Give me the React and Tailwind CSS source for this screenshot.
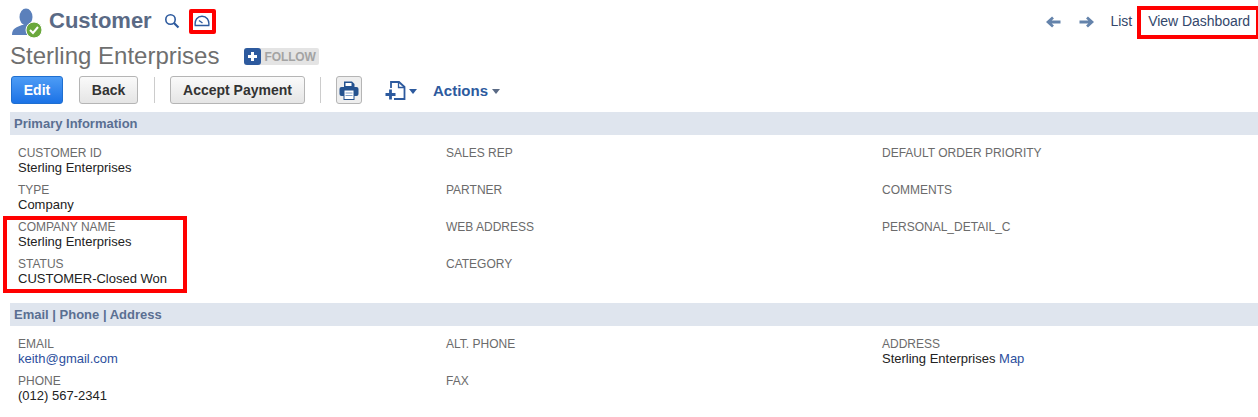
const SectionBar = ({ title }) => (
  <div className="ml-[10px] h-[23px] bg-[#dfe5ee] pl-[4px] text-[13px] leading-[23px] font-bold text-[#5a6f92]">{title}</div>
);

const Field = ({ label, children }) => (
  <div className="h-[37px]">
    <div className="text-[12px] leading-[15px] text-[#6b6b6b]">{label}</div>
    <div className="-mt-[1px] text-[13px] leading-[15px] text-[#222]">{children}</div>
  </div>
);

const Col = ({ w, children }) => <div style={{ width: w }}>{children}</div>;

const UserIcon = () => (
  <svg width="32" height="32" viewBox="0 0 32 32" className="shrink-0">
    <ellipse cx="15" cy="11" rx="6.5" ry="8.5" fill="#5b80bb" />
    <path d="M1 29 C1 22 6 21 11 19 L19 19 C23 21 27 22 27 29 Z" fill="#5b80bb" />
    <circle cx="23" cy="24" r="8" fill="#6aa83c" stroke="#fff" strokeWidth="1" />
    <path d="M19 24 l3 3 l5 -6" fill="none" stroke="#fff" strokeWidth="2" />
  </svg>
);

const Caret = ({ c }) => (
  <svg width="8" height="5" viewBox="0 0 8 5"><path d="M0 0 H8 L4 5 Z" fill={c} /></svg>
);

const Btn = ({ children, w }) => (
  <button className="h-[28px] rounded-[3px] border border-[#b5b5b5] bg-gradient-to-b from-[#fafafa] to-[#e5e5e5] text-[14px] font-bold text-[#333]" style={{ width: w }}>
    {children}
  </button>
);

const Sep = () => <div className="h-[26px] w-px bg-[#ccc]" />;

export default function App() {
  return (
    <div className="relative h-[417px] w-[1258px] overflow-hidden bg-white font-['Liberation_Sans',Arial,sans-serif]">
      {/* title row */}
      <div className="flex h-[42px] items-center pl-[11px]">
        <div className="mt-[1px]"><UserIcon /></div>
        <span className="ml-[6px] text-[22px] leading-none font-bold text-[#5a6a85]">Customer</span>
        <svg width="16" height="16" viewBox="0 0 16 16" className="ml-[12px]">
          <circle cx="6.5" cy="6.5" r="4.7" fill="none" stroke="#2d5a9e" strokeWidth="1.6" />
          <path d="M10 10 L14.5 14.5" stroke="#2d5a9e" strokeWidth="2.2" />
        </svg>
        <svg width="16" height="12" viewBox="0 0 16 12" className="ml-[14px]">
          <path d="M1.2 10.5 C0.5 5 3.5 1.2 8 1.2 C12.5 1.2 15.5 5 14.8 10.5 Z" fill="none" stroke="#2d5a9e" strokeWidth="1.4" />
          <path d="M5 5.5 L8.5 8" stroke="#2d5a9e" strokeWidth="1.4" />
        </svg>
        <div className="mt-[1px] ml-auto flex items-center pr-[8px]">
          <svg width="15" height="12" viewBox="0 0 15 12">
            <path d="M14.5 6 H3 M7 1.5 L2 6 L7 10.5" fill="none" stroke="#6483ab" strokeWidth="2.8" />
          </svg>
          <svg width="15" height="12" viewBox="0 0 15 12" className="ml-[18px]">
            <path d="M0.5 6 H12 M8 1.5 L13 6 L8 10.5" fill="none" stroke="#6483ab" strokeWidth="2.8" />
          </svg>
          <span className="ml-[16px] text-[14px] text-[#33476b]">List</span>
          <span className="ml-[16px] text-[14px] tracking-[-0.05px] text-[#33476b]">View Dashboard</span>
        </div>
      </div>

      {/* record name */}
      <div className="flex h-[28px] items-center pl-[10px]">
        <span className="text-[24px] leading-none text-[#6f6f6f]">Sterling Enterprises</span>
        <div className="mt-[1px] ml-[25px] flex h-[17px] items-center rounded-[2px] bg-[#e4e4e4]">
          <div className="flex h-[17px] w-[17px] items-center justify-center rounded-[3px] bg-[#2d5a9e]">
            <svg width="11" height="11" viewBox="0 0 11 11"><path d="M5.5 1 V10 M1 5.5 H10" stroke="#fff" strokeWidth="3" /></svg>
          </div>
          <span className="ml-[3px] pr-[3px] text-[12px] font-bold tracking-[-0.1px] text-[#a3a3a3]">FOLLOW</span>
        </div>
      </div>

      {/* buttons */}
      <div className="mt-[6px] flex h-[28px] items-center pl-[11px]">
        <button className="h-[28px] w-[52px] rounded-[3px] border border-[#1f6fd0] bg-gradient-to-b from-[#4d9cf5] to-[#1a72e6] text-[14px] font-bold text-white">Edit</button>
        <div className="ml-[16px]"><Btn w={59}>Back</Btn></div>
        <div className="ml-[16px] mr-[15px]"><Sep /></div>
        <Btn w={135}>Accept Payment</Btn>
        <div className="mx-[15px]"><Sep /></div>
        <button className="flex h-[28px] w-[26px] items-center justify-center rounded-[3px] border border-[#b5b5b5] bg-[#eeeeee]">
          <svg width="20" height="19" viewBox="0 0 20 19">
            <path d="M5 0.5 H13 L15.5 3 V6 H5 Z" fill="#24528f" />
            <path d="M6.5 2 H12.5 V5 H6.5 Z" fill="#fff" />
            <rect x="0.5" y="6" width="19" height="9" rx="2" fill="#24528f" />
            <rect x="5" y="9" width="10" height="9.5" fill="#fff" stroke="#24528f" />
            <path d="M6.5 12 H13.5 M6.5 14.5 H13.5" stroke="#7f9cc4" />
          </svg>
        </button>
        <svg width="22" height="19" viewBox="0 0 22 19" className="mt-[1px] ml-[23px]">
          <path d="M6 7 V1 H14 L19.5 6 V18 H9" fill="none" stroke="#2d5a9e" strokeWidth="1.8" />
          <path d="M13.5 1 V6.5 H19.5" fill="none" stroke="#2d5a9e" strokeWidth="1.3" />
          <path d="M5.5 8.5 V18.5 M0.5 13.5 H10.5" stroke="#2d5a9e" strokeWidth="2.8" />
        </svg>
        <div className="mt-[2px] ml-[2px]"><Caret c="#2d5a9e" /></div>
        <span className="mt-[2px] ml-[16px] text-[15px] font-bold text-[#2d5a9e]">Actions</span>
        <div className="mt-[2px] ml-[4px]"><Caret c="#5a6a85" /></div>
      </div>

      {/* primary info */}
      <div className="mt-[8px]"><SectionBar title="Primary Information" /></div>
      <div className="mt-[11px] flex pl-[18px]">
        <Col w={428}>
          <Field label="CUSTOMER ID">Sterling Enterprises</Field>
          <Field label="TYPE">Company</Field>
          <Field label="COMPANY NAME">Sterling Enterprises</Field>
          <Field label="STATUS">CUSTOMER-Closed Won</Field>
        </Col>
        <Col w={436}>
          <Field label="SALES REP" />
          <Field label="PARTNER" />
          <Field label="WEB ADDRESS" />
          <Field label="CATEGORY" />
        </Col>
        <Col w={300}>
          <Field label="DEFAULT ORDER PRIORITY" />
          <Field label="COMMENTS" />
          <Field label="PERSONAL_DETAIL_C" />
        </Col>
      </div>

      {/* contact */}
      <div className="mt-[9px]"><SectionBar title="Email | Phone | Address" /></div>
      <div className="mt-[11px] flex pl-[18px]">
        <Col w={428}>
          <Field label="EMAIL"><span className="text-[#2d4f9e]">keith@gmail.com</span></Field>
          <Field label="PHONE">(012) 567-2341</Field>
        </Col>
        <Col w={436}>
          <Field label="ALT. PHONE" />
          <Field label="FAX" />
        </Col>
        <Col w={300}>
          <Field label="ADDRESS">Sterling Enterprises <span className="text-[#2d4f9e]">Map</span></Field>
        </Col>
      </div>

      {/* red annotation boxes */}
      <div className="absolute top-[9px] left-[189px] h-[25px] w-[27px] rounded-[2px] border-[4px] border-[#f00]" />
      <div className="absolute top-[6px] left-[1137px] h-[33px] w-[121px] border-[4px] border-r-[2px] border-[#f00]" />
      <div className="absolute top-[216px] left-[3px] h-[77px] w-[184px] border-[4px] border-[#f00]" />
    </div>
  );
}
